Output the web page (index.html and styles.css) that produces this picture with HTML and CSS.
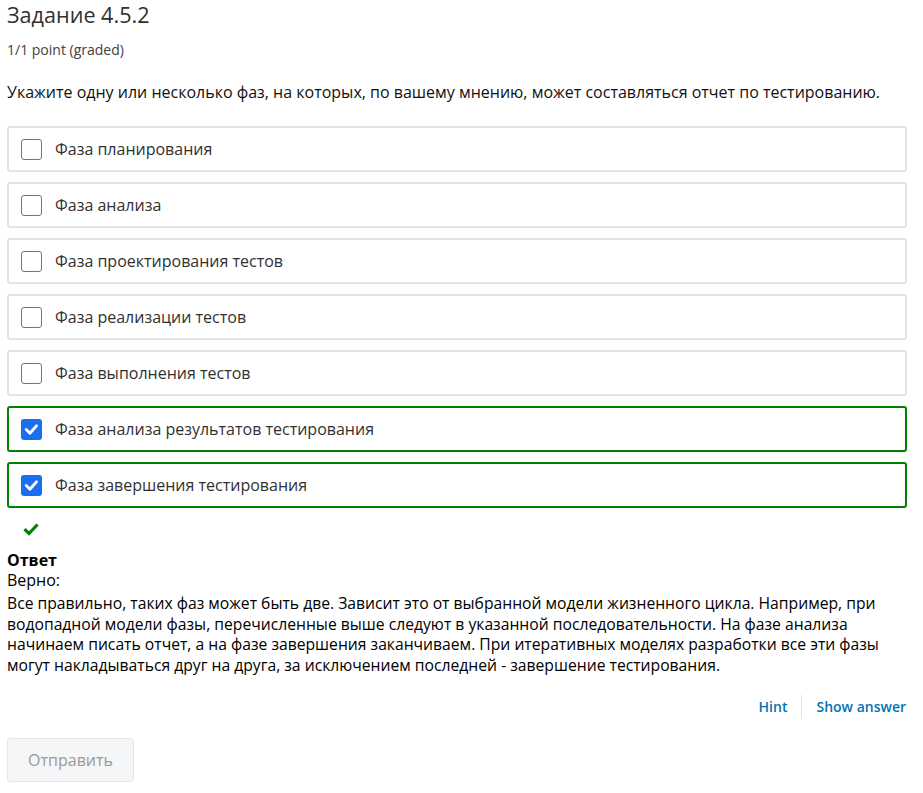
FILE: index.html
```html
<!DOCTYPE html>
<html lang="ru">
<head>
<meta charset="utf-8">
<link rel="stylesheet" href="styles.css">
</head>
<body>
<div class="problem">
  <h3 class="title">Задание 4.5.2</h3>
  <div class="points">1/1 point (graded)</div>
  <p class="question">Укажите одну или несколько фаз, на которых, по вашему мнению, может составляться отчет по тестированию.</p>
  <div class="choices">
    <label class="choice"><span class="box"></span><span class="label">Фаза планирования</span></label>
    <label class="choice"><span class="box"></span><span class="label">Фаза анализа</span></label>
    <label class="choice"><span class="box"></span><span class="label">Фаза проектирования тестов</span></label>
    <label class="choice"><span class="box"></span><span class="label">Фаза реализации тестов</span></label>
    <label class="choice"><span class="box"></span><span class="label">Фаза выполнения тестов</span></label>
    <label class="choice correct"><span class="box checked"><svg viewBox="0 0 21 21" width="21" height="21"><path d="M5.2 10.6 L8.9 14.2 L15.6 6.8" fill="none" stroke="#fff" stroke-width="2.8" stroke-linecap="round" stroke-linejoin="round"/></svg></span><span class="label">Фаза анализа результатов тестирования</span></label>
    <label class="choice correct"><span class="box checked"><svg viewBox="0 0 21 21" width="21" height="21"><path d="M5.2 10.6 L8.9 14.2 L15.6 6.8" fill="none" stroke="#fff" stroke-width="2.8" stroke-linecap="round" stroke-linejoin="round"/></svg></span><span class="label">Фаза завершения тестирования</span></label>
  </div>
  <div class="status"><svg viewBox="0 0 16 14" width="16" height="14"><path d="M1.5 7.2 L6 11.5 L14.5 2.5" fill="none" stroke="#008100" stroke-width="3.2" stroke-linejoin="miter"/></svg></div>
  <div class="solution">
    <div class="sol-title">Ответ</div>
    <div class="sol-verdict">Верно:</div>
    <p class="sol-text">Все правильно, таких фаз может быть две. Зависит это от выбранной модели жизненного цикла. Например, при<br>водопадной модели фазы, перечисленные выше следуют в указанной последовательности. На фазе анализа<br>начинаем писать отчет, а на фазе завершения заканчиваем. При итеративных моделях разработки все эти фазы<br>могут накладываться друг на друга, за исключением последней - завершение тестирования.</p>
  </div>
  <div class="actions">
    <a class="action">Hint</a>
    <span class="sep"></span>
    <a class="action">Show answer</a>
  </div>
  <button class="submit" disabled>Отправить</button>
</div>
</body>
</html>
```

FILE: styles.css
```css
html, body {
  margin: 0;
  padding: 0;
  background: #fff;
}
body {
  font-family: "Open Sans", "Noto Sans", sans-serif;
  color: #313131;
}
.problem {
  width: 900px;
  margin-left: 7px;
}
.title {
  margin: 0;
  font-size: 21.6px;
  font-weight: 400;
  line-height: 30px;
  color: #313131;
}
.points {
  margin-top: 10px;
  font-size: 14px;
  line-height: 20px;
  color: #414141;
}
.question {
  margin: 20px 0 0;
  font-size: 16px;
  line-height: 24px;
  color: #111;
}
.choices {
  margin-top: 22px;
  display: flex;
  flex-direction: column;
  gap: 10px;
}
.choice {
  display: flex;
  align-items: center;
  height: 46px;
  box-sizing: border-box;
  border: 2px solid #e3e3e3;
  border-radius: 3px;
  padding-left: 12px;
  font-size: 16px;
}
.choice.correct {
  border-color: #008100;
}
.box {
  width: 21px;
  height: 21px;
  box-sizing: border-box;
  border: 1px solid #767676;
  border-radius: 3px;
  background: #fff;
  display: flex;
}
.box.checked {
  border: none;
  background: #1a6ff0;
}
.label {
  margin-left: 13px;
  color: #313131;
}
.status {
  margin-top: 14px;
  padding-left: 16px;
  height: 14px;
}
.status svg {
  display: block;
}
.solution {
  margin-top: 14px;
  font-size: 16px;
  color: #000;
}
.sol-title {
  font-weight: 700;
  line-height: 20px;
}
.sol-verdict {
  line-height: 20px;
}
.sol-text {
  margin: 3px 0 0;
  font-size: 15.7px;
  line-height: 20.7px;
  white-space: nowrap;
}
.actions {
  margin-top: 19px;
  display: flex;
  justify-content: flex-end;
  align-items: center;
  height: 24px;
}
.action {
  font-size: 14px;
  font-weight: 600;
  color: #0075b4;
}
.sep {
  width: 1px;
  height: 24px;
  background: #e0e0e0;
  margin: 0 14px;
}
.action:last-child {
  margin-right: 1px;
}
.submit {
  margin-top: 19px;
  display: block;
  width: 127px;
  height: 44px;
  border: 1px solid #e4e6e8;
  border-radius: 3px;
  background: #f4f6f7;
  color: #9a9a9a;
  font-family: "Open Sans", "Noto Sans", sans-serif;
  font-size: 16px;
}
```
